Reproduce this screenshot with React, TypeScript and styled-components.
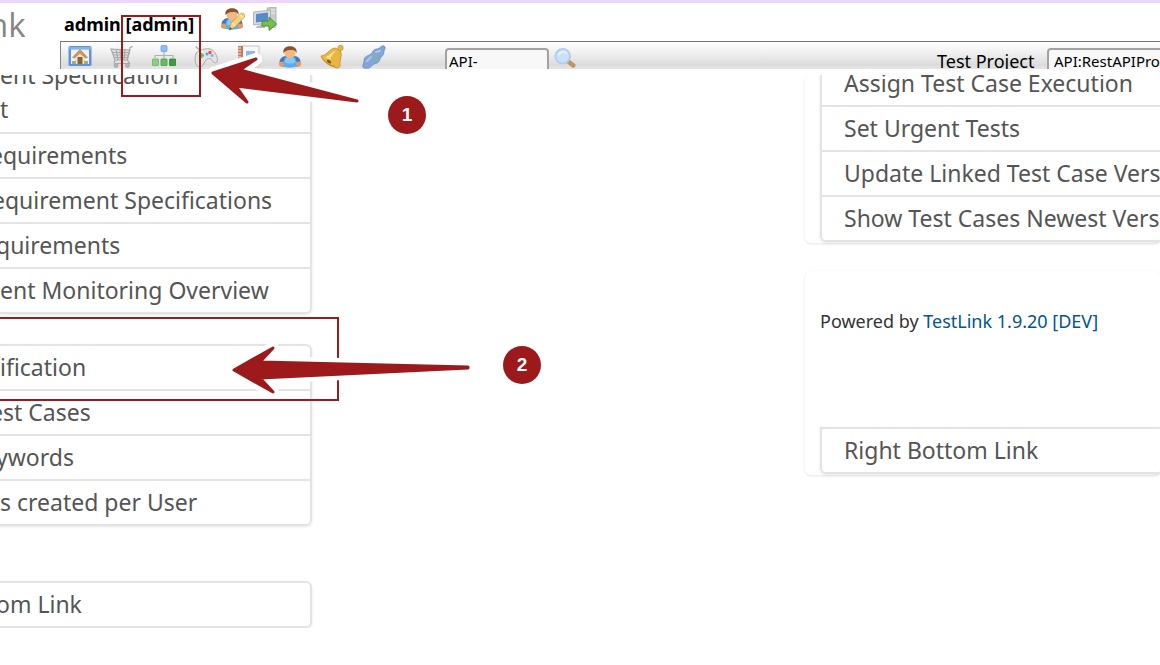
import React from "react";
import styled, { createGlobalStyle } from "styled-components";

const sans = `"Trebuchet MS", "Noto Sans", sans-serif`;
const red = "#9c191c";

const GlobalStyle = createGlobalStyle`
  * { box-sizing: border-box; }
  body { margin: 0; background: #fff; font-family: ${sans}; overflow-x: hidden; }
`;

const Page = styled.div`
  position: relative;
  min-height: 100vh;
  overflow: hidden;
`;

const Header = styled.header`
  display: flex;
  border-top: 3px solid #edd6fb;
  padding-bottom: 6px;
`;

const Logo = styled.div`
  width: 60px;
  flex: none;
  font-family: "Open Sans", sans-serif;
  font-size: 33px;
  line-height: 44px;
  text-indent: -12px;
  color: #858585;
`;

const HeaderMain = styled.div`
  flex: 1;
  min-width: 0;
`;

const UserRow = styled.div`
  display: flex;
  height: 38px;
  padding: 4px 4px 0;
`;

const UserName = styled.strong`
  width: 157px;
  font-size: 18px;
  line-height: 35px;
  color: #000;
  white-space: nowrap;
`;

const IconButton = styled.button`
  display: block;
  width: 24px;
  height: 24px;
  flex: none;
  padding: 0;
  border: 0;
  background: none;
  svg { display: block; width: 24px; height: 24px; }
`;

const UserActions = styled.div`
  display: flex;
  gap: 8px;
`;

const Toolbar = styled.div`
  display: flex;
  align-items: flex-start;
  height: 28px;
  padding-left: 7px;
  overflow: hidden;
  border-top: 1px solid #757575;
  border-left: 1px solid #858585;
  background: linear-gradient(#fff, #f2f2f2 35%, #dcdcdc 85%, #e6e6e6);
`;

const IconBar = styled.nav`
  display: flex;
  gap: 18px;
  padding-top: 3px;
`;

const SearchForm = styled.form`
  display: flex;
  gap: 5px;
  margin-left: 59px;
  padding-top: 6px;
`;

const field = `
  height: 26px;
  border: 2px solid #a2a2a2;
  border-radius: 4px;
  background: #f8f8f8;
  color: #000;
  font-family: "Noto Sans", sans-serif;
`;

const SearchInput = styled.input`
  ${field}
  width: 104px;
  padding: 0 2px;
  font-size: 15px;
`;

const SearchButton = styled(IconButton)`
  width: 22px;
  height: 22px;
  svg { width: 22px; height: 22px; }
`;

const ProjectPicker = styled.div`
  display: flex;
  flex: none;
  gap: 7px;
  width: 223px;
  margin-left: auto;
  padding-top: 6px;
`;

const ProjectLabel = styled.label`
  font-size: 18px;
  line-height: 27px;
  width: 103px;
  flex: none;
  white-space: nowrap;
`;

const ProjectSelect = styled.select`
  ${field}
  appearance: none;
  flex: none;
  width: 200px;
  padding: 0 5px;
  font-size: 15px;
`;

const Columns = styled.main`
  display: flex;
  justify-content: space-between;
  overflow: hidden;
`;

const LeftColumn = styled.div`
  width: 312px;
  flex: none;
`;

const RightColumn = styled.div`
  width: 355px;
  flex: none;
`;

const List = styled.div<{ $space?: number; $side: "left" | "right"; $squareTop?: boolean }>`
  margin-top: ${(p) => p.$space ?? 0}px;
  border: 2px solid #e4e4e4;
  border-width: ${(p) => (p.$side === "left" ? "2px 2px 2px 0" : "2px 0 2px 2px")};
  border-radius: ${(p) =>
    p.$side === "left" ? (p.$squareTop ? "0 0 6px 0" : "0 6px 6px 0") : "0 0 0 6px"};
  border-top-width: ${(p) => (p.$squareTop ? 0 : 2)}px;
  box-shadow: 0 1px 3px rgba(0, 0, 0, 0.1);
  overflow: hidden;
`;

const Item = styled.a<{ $indent?: boolean; $cut?: number }>`
  display: block;
  height: 43px;
  padding-left: ${(p) => (p.$indent ? 22 : 0)}px;
  text-indent: ${(p) => -(p.$cut ?? 0)}px;
  font-size: 23px;
  line-height: 42px;
  color: #555;
  text-decoration: none;
  white-space: nowrap;
  & + & {
    height: 45px;
    border-top: 2px solid #e4e4e4;
  }
`;

const FollowingItem = styled(Item)`
  height: 45px;
  border-top: 2px solid #e4e4e4;
`;

const WrappedItem = styled(Item)`
  height: 74px;
  margin-top: -17px;
  line-height: 34px;
  white-space: pre-line;
`;

const TrimmedItem = styled(Item)`
  height: 30px;
  line-height: 16px;
`;

const Card = styled.section<{ $space?: number }>`
  margin-top: ${(p) => p.$space ?? 0}px;
  padding: 0 0 1px 15px;
  border-radius: 6px;
  box-shadow: 0 1px 3px rgba(0, 0, 0, 0.1);
`;

const Powered = styled.p`
  margin: 0;
  padding-top: 38px;
  font-size: 18px;
  line-height: 24px;
  color: #333;
  white-space: nowrap;
  a { color: #005498; text-decoration: none; }
`;

const Annotations = styled.div`
  position: absolute;
  inset: 0;
  pointer-events: none;
`;

const Frame = styled.div<{ $x: number; $y: number; $w: number; $h: number }>`
  position: absolute;
  left: ${(p) => p.$x}px;
  top: ${(p) => p.$y}px;
  width: ${(p) => p.$w}px;
  height: ${(p) => p.$h}px;
  border: 2px solid ${red};
`;

const Arrows = styled.svg`
  position: absolute;
  left: 0;
  top: 0;
`;

const Step = styled.span<{ $x: number; $y: number }>`
  position: absolute;
  left: ${(p) => p.$x}px;
  top: ${(p) => p.$y}px;
  width: 38px;
  height: 38px;
  border-radius: 50%;
  background: ${red};
  color: #fff;
  font: bold 19px/38px "Liberation Sans", sans-serif;
  text-align: center;
`;

const HomeIcon = () => (
  <svg viewBox="0 0 24 24">
    <rect x="0.500" y="1" width="23" height="20" rx="1.500" fill="#5f92d6" />
    <path d="M1 2h22v2.500H1z" fill="#86b0e8" />
    <rect x="3" y="4.500" width="18" height="14.500" fill="#eaf2fa" />
    <path d="M6 11l6-5 6 5v8H6z" fill="#f3e6cf" />
    <path d="M4 12.500L12 4l8 8.500-2.500 1L12 8.500l-5.500 5z" fill="#cc9257" />
    <rect x="9.500" y="12" width="5" height="7" fill="#8b603c" />
    <path d="M4 16h4v3H4zM16 16h4v3h-4z" fill="#93b385" />
  </svg>
);

const CartIcon = () => (
  <svg viewBox="0 0 24 24" fill="none" stroke="#a9a9a9" strokeWidth="1.200">
    <path d="M1 4l19 1-3 10H5z" fill="#dedede" />
    <path d="M23 1.500l-3 1L17.500 15l2 3.500H5M2 7.500h17M3 10h16M4 12.500h14M6 4l2 11M10 4l1 11M15 4l-1 11" />
    <path d="M5 15l-1 3.500" />
    <circle cx="6" cy="20.500" r="1.800" fill="#b9b9b9" />
    <circle cx="17.500" cy="20.500" r="1.800" fill="#b9b9b9" />
  </svg>
);

const TreeIcon = () => (
  <svg viewBox="0 0 24 24">
    <path d="M12 7v7M3 13v-2.500h18V13" fill="none" stroke="#b2b2b2" strokeWidth="1.200" />
    <rect x="9" y="0.500" width="6" height="6" rx="1" fill="#8bbcf5" stroke="#6c9fe0" strokeWidth=".8" />
    <rect x="0.400" y="14" width="6" height="6.500" rx=".5" fill="#8ccf86" stroke="#64b15f" strokeWidth=".8" />
    <rect x="9" y="14" width="6" height="6.500" rx=".5" fill="#65bb60" stroke="#46a044" strokeWidth=".8" />
    <rect x="17.600" y="14" width="6" height="6.500" rx=".5" fill="#3ca13a" stroke="#25802a" strokeWidth=".8" />
  </svg>
);

const GamepadIcon = () => (
  <svg viewBox="0 0 24 24">
    <path d="M2 1c0 3 4 2 5 6" fill="none" stroke="#aaa" strokeWidth="1.300" />
    <path d="M2 8c3-3 6-3 9-4s8 0 10 4c2 3 3 6 2 9-2 2-4 0-5-2-2-2-4-2-6 0s-2 6-6 7c-5 0-6-8-4-14z" fill="#e3e3e3" stroke="#ababab" />
    <path d="M4 9c2-2 4-2 5-3" fill="none" stroke="#fff" strokeWidth="1.500" />
    <path d="M5 10.500h5M7.500 8v5" stroke="#5cba5c" strokeWidth="2" />
    <circle cx="16" cy="7.500" r="1.700" fill="#ee4b4b" />
    <circle cx="13" cy="9" r="1.500" fill="#5b9ce8" />
    <circle cx="18" cy="10.500" r="1.500" fill="#6cbdf0" />
  </svg>
);

const NotebookIcon = () => (
  <svg viewBox="0 0 24 24">
    <path d="M5 1h18v21H5z" fill="#f8f8f8" stroke="#c4c4c4" />
    <path d="M2 1h5v20H2z" fill="#c17d5a" />
    <path d="M1 3h4M1 6h4M1 9h4M1 12h4M1 15h4" stroke="#eee" />
    <path d="M10 6h9v7h-9z" fill="#8db8ef" />
    <path d="M10 16h10M10 19h8" stroke="#bbb" />
  </svg>
);

const Person = () => (
  <>
    <path d="M1.500 17c0-3 3-6 6.500-6h8c4 0 6.500 3 6.500 6l-2 4.500h-17z" fill="#4479b8" />
    <path d="M7 12.500h10l3 8c-4 3-12 3-16 0z" fill="#5aacf2" />
    <path d="M8 13h8l1.500 4c-3 2-8 2-11 0z" fill="#86c8fa" />
    <circle cx="3.500" cy="19" r="2.500" fill="#e59a61" />
    <circle cx="20.500" cy="19" r="2.500" fill="#e59a61" />
    <ellipse cx="12" cy="8" rx="5.500" ry="5.500" fill="#f0b883" />
    <path d="M5.500 8c-2-9 15-9 13 0-1-2-2-3-4-3S8 4.500 5.500 8z" fill="#8b532d" />
  </>
);

const UserIcon = () => <svg viewBox="0 0 24 24"><Person /></svg>;

const EditUserIcon = () => (
  <svg viewBox="0 0 24 24">
    <g transform="translate(-1 0)"><Person /></g>
    <path d="M8 23l2-7L20 6.500c2-1.500 5 1.500 3.500 3.500L14 20z" fill="#f5d277" stroke="#c89a42" strokeWidth=".8" />
    <path d="M11 16l3 3M19 8l3 3" stroke="#fbeab4" strokeWidth="1.500" />
    <path d="M8 23l1-3 2 2z" fill="#6d4a25" />
  </svg>
);

const LogoutIcon = () => (
  <svg viewBox="0 0 24 24">
    <path d="M14 1l9-1v20l-7 1z" fill="#c9cccc" stroke="#a4a9a9" strokeWidth=".8" />
    <path d="M18 3h4M18 6h4" stroke="#f2f2f2" />
    <path d="M0.500 5l17-2v13l-17 2z" fill="#d7dada" stroke="#a4a9a9" strokeWidth=".8" />
    <path d="M3 7l12-1.500v8.500L3 15.500z" fill="#568ac9" />
    <path d="M4 19l8-2v4H3z" fill="#b8b8b8" />
    <path d="M9 14h7v-4l7.500 7-7.500 6.500V19H9z" fill="#78bf50" stroke="#45892f" strokeWidth=".9" />
  </svg>
);

const BellIcon = () => (
  <svg viewBox="0 0 24 24">
    <rect x="18" y="0.500" width="5" height="5" rx="2" fill="#e9b948" stroke="#bd8b29" strokeWidth=".8" />
    <path d="M1 11C7 11 9 3 16 3l5 4c1 6-2 9-1 14-1 3-4 2-6 1C9 20 3 17 1 11z" fill="#eab642" stroke="#c28d2a" strokeWidth=".8" />
    <path d="M5 12c5-1 6-6 11-6-4 3-5 7-6 9z" fill="#fbdc8a" />
    <path d="M2 12c3 5 8 8 14 9-2 2-10 0-14-9z" fill="#c78e2d" />
    <ellipse cx="9" cy="16.500" rx="2.500" ry="1.500" transform="rotate(35 9 16.500)" fill="#86601f" />
  </svg>
);

const PlugIcon = () => (
  <svg viewBox="0 0 24 24">
    <path d="M1 22c-1-2 1-3 1-6 0-5 4-5 7-7 2-2 2-5 6-5 3 0 4-4 7-3 2 1 1 3 0 5 0 5-3 5-4 8-1 4-3 4-6 5-3 2-4 5-8 4-1 0-2 1-3-1z" fill="#81a7d9" stroke="#678fc5" strokeWidth=".8" />
    <path d="M10 9l6 7" stroke="#80b98d" strokeWidth="1.800" />
    <path d="M5 16l4-4M14 7l4-1" stroke="#a9c8ea" strokeWidth="2" strokeLinecap="round" />
  </svg>
);

const SearchIcon = () => (
  <svg viewBox="0 0 24 24">
    <path d="M16 15l5 4" stroke="#c39362" strokeWidth="5" strokeLinecap="round" />
    <circle cx="9.500" cy="9" r="8" fill="#c9e0f8" stroke="#aecdef" strokeWidth="2" />
    <path d="M5 8c1-4 7-5 9-2" fill="none" stroke="#e4f1fd" strokeWidth="2" />
  </svg>
);

const tools = [
  { label: "Home", Icon: HomeIcon },
  { label: "Requirements", Icon: CartIcon },
  { label: "Test specification", Icon: TreeIcon },
  { label: "Execute", Icon: GamepadIcon },
  { label: "Reports", Icon: NotebookIcon },
  { label: "Users", Icon: UserIcon },
  { label: "Events", Icon: BellIcon },
  { label: "Plugins", Icon: PlugIcon },
];

const arrowPaths = [
  "M213 73L256 59L240 70L357 101L236 86L247 102Z",
  "M234 370L273 348L260 362L468 367L468 368L260 378L273 392Z",
];

export default function App() {
  return (
    <Page>
      <GlobalStyle />
      <Header>
        <Logo>nk</Logo>
        <HeaderMain>
          <UserRow>
            <UserName>admin [admin]</UserName>
            <UserActions>
              <IconButton aria-label="Edit account"><EditUserIcon /></IconButton>
              <IconButton aria-label="Log out"><LogoutIcon /></IconButton>
            </UserActions>
          </UserRow>
          <Toolbar>
            <IconBar>
              {tools.map(({ label, Icon }) => (
                <IconButton key={label} aria-label={label}><Icon /></IconButton>
              ))}
            </IconBar>
            <SearchForm>
              <SearchInput aria-label="Test case" defaultValue="API-" />
              <SearchButton type="button" aria-label="Search"><SearchIcon /></SearchButton>
            </SearchForm>
            <ProjectPicker>
              <ProjectLabel htmlFor="project">Test Project</ProjectLabel>
              <ProjectSelect id="project"><option>API:RestAPIPro</option></ProjectSelect>
            </ProjectPicker>
          </Toolbar>
        </HeaderMain>
      </Header>
      <Columns>
        <LeftColumn>
          <List $side="left" $squareTop>
            <WrappedItem href="#">{"ent Specification\nt"}</WrappedItem>
            <FollowingItem href="#" $cut={10}>equirements</FollowingItem>
            <FollowingItem href="#" $cut={8}>equirement Specifications</FollowingItem>
            <FollowingItem href="#" $cut={4}>quirements</FollowingItem>
            <FollowingItem href="#">ent Monitoring Overview</FollowingItem>
          </List>
          <List $side="left" $space={30}>
            <Item href="#">ification</Item>
            <FollowingItem href="#" $cut={10}>est Cases</FollowingItem>
            <FollowingItem href="#" $cut={4}>ywords</FollowingItem>
            <FollowingItem href="#">s created per User</FollowingItem>
          </List>
          <List $side="left" $space={55}>
            <Item href="#" $cut={4}>om Link</Item>
          </List>
        </LeftColumn>
        <RightColumn>
          <Card>
            <List $side="right" $squareTop>
              <TrimmedItem href="#" $indent>Assign Test Case Execution</TrimmedItem>
              <FollowingItem href="#" $indent>Set Urgent Tests</FollowingItem>
              <FollowingItem href="#" $indent>Update Linked Test Case Vers</FollowingItem>
              <FollowingItem href="#" $indent>Show Test Cases Newest Versi</FollowingItem>
            </List>
          </Card>
          <Card $space={28}>
            <Powered>Powered by <a href="#">TestLink 1.9.20 [DEV]</a></Powered>
            <List $side="right" $space={94}>
              <Item href="#" $indent>Right Bottom Link</Item>
            </List>
          </Card>
        </RightColumn>
      </Columns>
      <Annotations>
        <Frame $x={121} $y={15} $w={80} $h={82} />
        <Frame $x={-4} $y={317} $w={343} $h={84} />
        <Arrows width="560" height="420" viewBox="0 0 560 420" aria-hidden="true">
          {arrowPaths.map((d) => (
            <g key={d} strokeLinejoin="round">
              <path d={d} fill="#fff" stroke="#fff" strokeWidth="12" />
              <path d={d} fill={red} stroke={red} strokeWidth="3" />
            </g>
          ))}
        </Arrows>
        <Step $x={388} $y={96}>1</Step>
        <Step $x={503} $y={346}>2</Step>
      </Annotations>
    </Page>
  );
}
